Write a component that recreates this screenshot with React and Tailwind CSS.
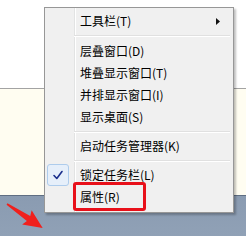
import React from 'react';

// Taskbar context menu (Windows 7 style)

function Separator({ h = 'h-[7px]' }) {
  return (
    <div className={`flex items-center ${h}`}>
      <div className="w-[29px]" />
      <div className="flex-1 mr-[3px]">
        <div className="h-px bg-[#e0e0e0]" />
        <div className="h-px bg-white" />
      </div>
    </div>
  );
}

function MenuItem({ label, checked = false, submenu = false }) {
  return (
    <div className="flex items-center h-[22px]">
      <div className="w-[29px] h-full flex items-center pl-[2px]">
        {checked && (
          <div className="w-[22px] h-[22px] rounded-[3px] border border-[#aeccec] bg-[#e6effa] flex items-center justify-center">
            <svg width="12" height="12" viewBox="0 0 12 12">
              <path d="M2 6.5 L4.8 9.5 L10 2.5" fill="none" stroke="#1c2f8c" strokeWidth="1.6" strokeLinecap="round" strokeLinejoin="round" />
            </svg>
          </div>
        )}
      </div>
      <div className="flex-1 pl-[6px] text-[12px] leading-none text-black">{label}</div>
      {submenu && (
        <svg width="4" height="7" viewBox="0 0 4 7" className="mr-[13px]">
          <path d="M0 0 L4 3.5 L0 7 Z" fill="#111" />
        </svg>
      )}
    </div>
  );
}

export default function App() {
  return (
    <div
      className="relative w-[246px] h-[236px] overflow-hidden bg-white"
      style={{ fontFamily: '"Noto Sans CJK SC", "Noto Sans", sans-serif' }}
    >
      {/* background: desktop window + taskbar */}
      <div className="h-[88px] bg-white" />
      <div className="h-[108px] bg-[#fffdf1] border-t border-[#a3a3a3] border-b border-b-[#5f6e82]" />
      <div className="h-[40px] bg-gradient-to-b from-[#8a9bb1] to-[#90a1b6]" />

      {/* context menu */}
      <div className="absolute left-[44px] top-[7px] w-[190px] h-[206px] border border-[#979797] bg-[#f0f0f0] shadow-[2px_2px_2px_rgba(0,0,0,0.25)]">
        <div className="absolute left-[29px] top-0 bottom-0 w-px bg-[#e2e3e3]" />
        <div className="absolute left-[30px] top-0 bottom-0 w-px bg-white" />
        <div className="relative pt-[2px]">
          <MenuItem label="工具栏(T)" submenu />
          <Separator h="h-[8px]" />
          <MenuItem label="层叠窗口(D)" />
          <MenuItem label="堆叠显示窗口(T)" />
          <MenuItem label="并排显示窗口(I)" />
          <MenuItem label="显示桌面(S)" />
          <Separator />
          <MenuItem label="启动任务管理器(K)" />
          <Separator />
          <MenuItem label="锁定任务栏(L)" checked />
          <MenuItem label="属性(R)" />
        </div>
      </div>

      {/* red highlight box */}
      <div className="absolute left-[73px] top-[182px] w-[73px] h-[29px] border-[3px] border-[#e8101a] rounded-[3px]" />

      {/* red arrow */}
      <svg className="absolute left-0 top-0" width="246" height="236" viewBox="0 0 246 236">
        <g transform="translate(7,204) rotate(34)">
          <polygon points="0,-0.8 26,-3 24,-8.5 43,0 24,8.5 26,3 0,0.8" fill="#f0201c" />
        </g>
      </svg>
    </div>
  );
}
